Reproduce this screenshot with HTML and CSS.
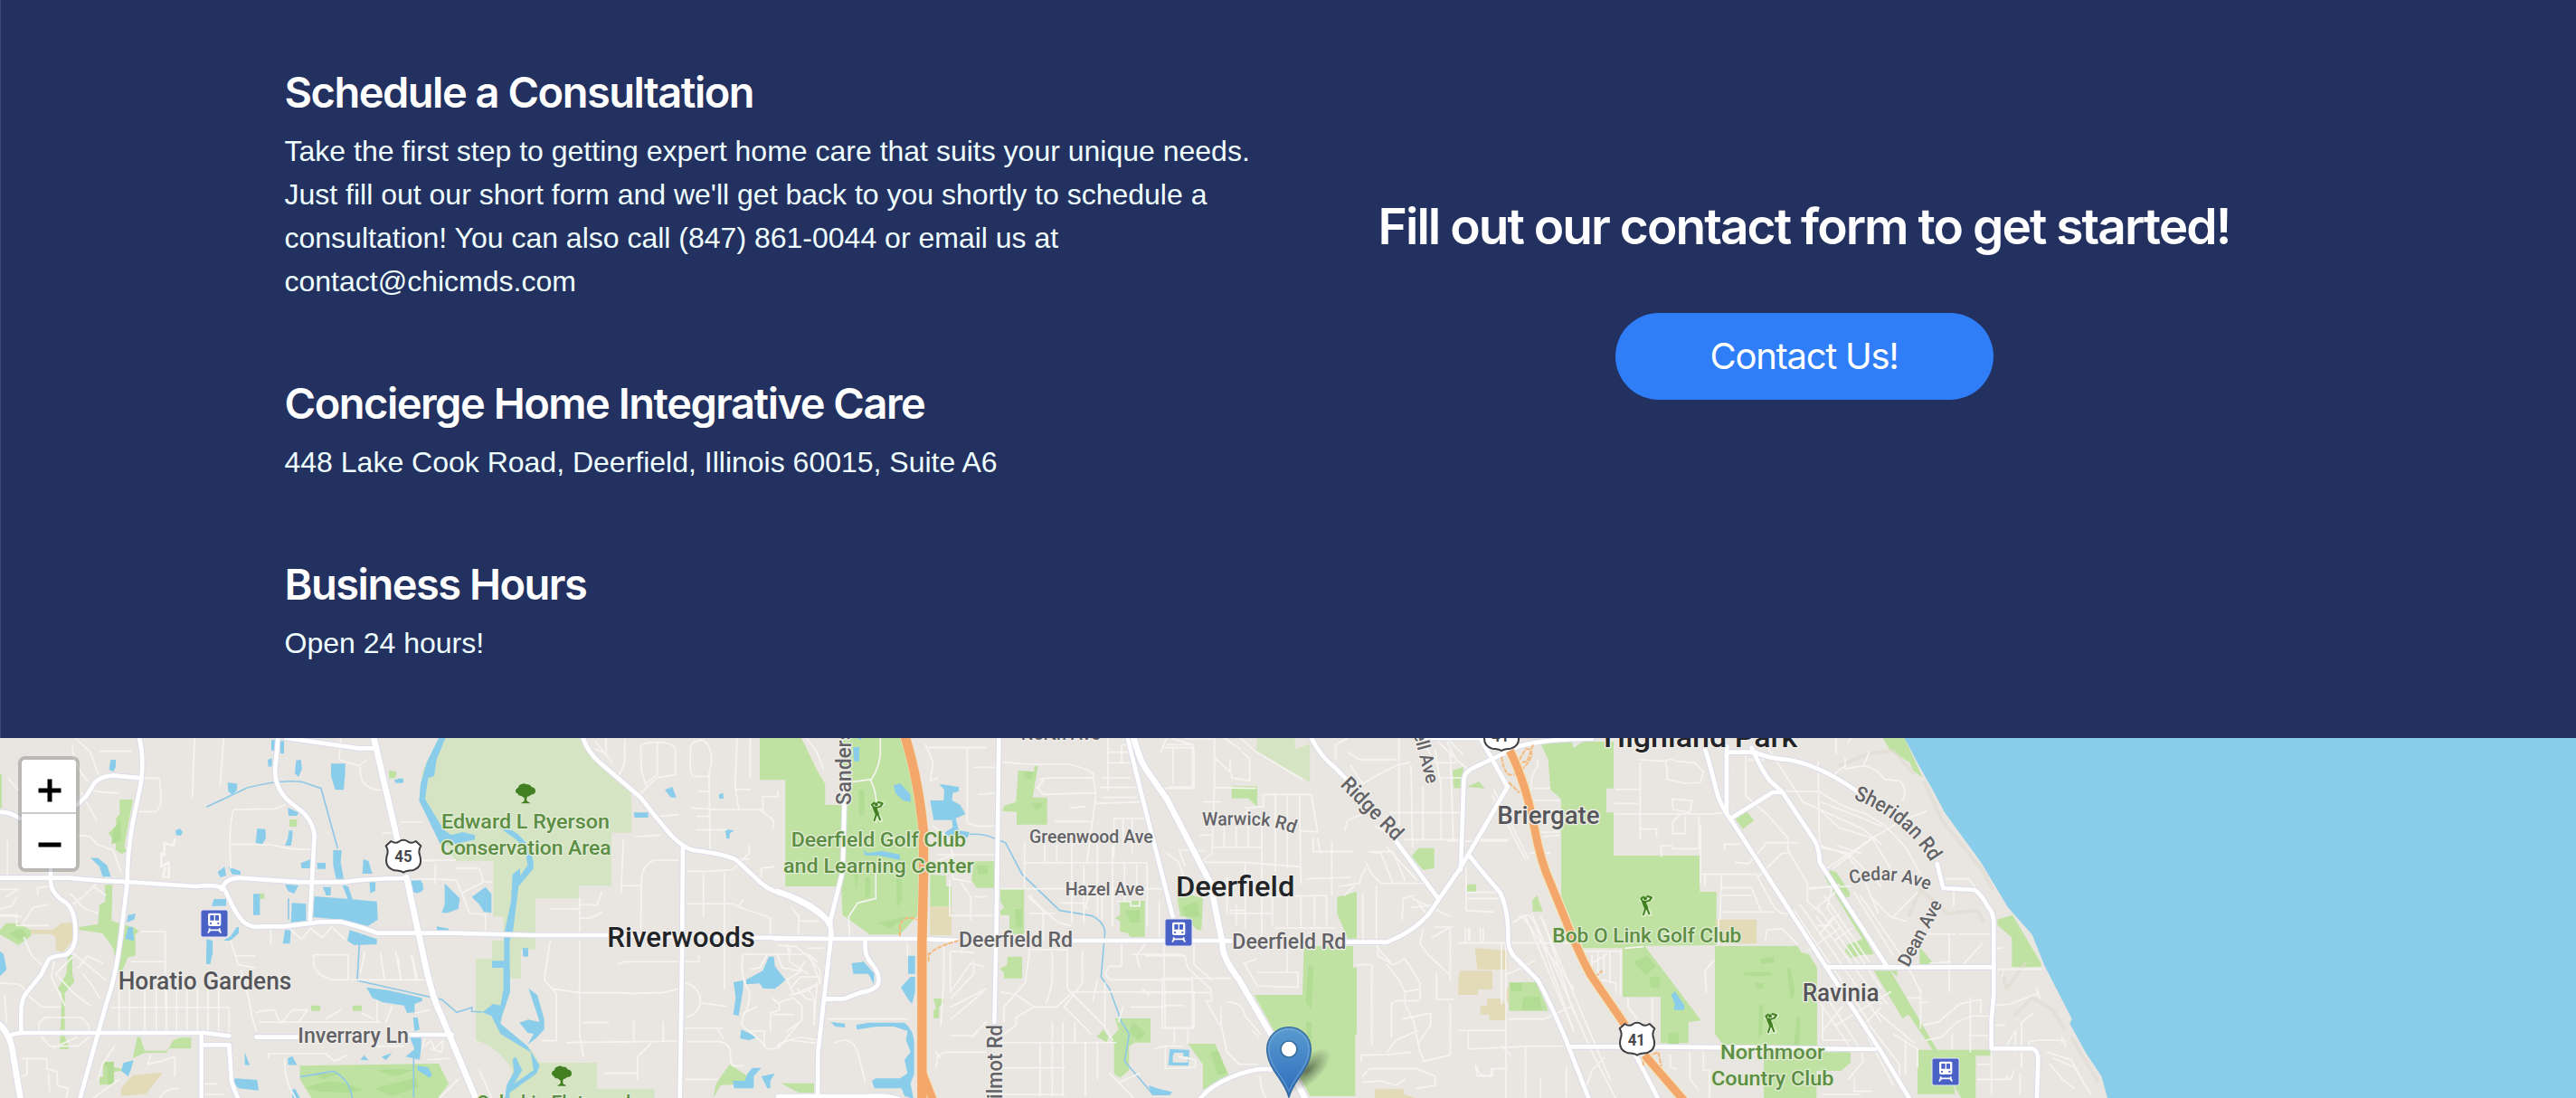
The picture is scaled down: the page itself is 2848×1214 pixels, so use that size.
FILE: index.html
```html
<!DOCTYPE html>
<html lang="en">
<head>
<meta charset="utf-8">
<title>Schedule a Consultation</title>
<link rel="stylesheet" href="styles.css">
</head>
<body>
<section class="contact">
  <div class="container">
    <div class="info">
      <div class="info-block">
        <h3>Schedule a Consultation</h3>
        <p>Take the first step to getting expert home care that suits your unique needs.<br>Just fill out our short form and we'll get back to you shortly to schedule a<br>consultation! You can also call (847) 861-0044 or email us at<br>contact@chicmds.com</p>
      </div>
      <div class="info-block">
        <h3>Concierge Home Integrative Care</h3>
        <p>448 Lake Cook Road, Deerfield, Illinois 60015, Suite A6</p>
      </div>
      <div class="info-block">
        <h3>Business Hours</h3>
        <p>Open 24 hours!</p>
      </div>
    </div>
    <div class="cta">
      <h2>Fill out our contact form to get started!</h2>
      <a class="btn">Contact Us!</a>
    </div>
  </div>
</section>
<section class="map">
<svg class="map-canvas" viewBox="0 18 8544 1194" preserveAspectRatio="none">
  <defs>
    <g id="train">
      <rect width="90" height="90" rx="7" fill="#4a62c6" stroke="#e6e6f4" stroke-width="3"/>
      <path fill="#fff" fill-rule="evenodd" d="M29 11h33q5 0 5 5v32q0 6-6 6H30q-6 0-6-6V16q0-5 5-5ZM31 18v17h13V18ZM48 18v17h12V18ZM30 42v5h6v-5ZM55 42v5h6v-5Z"/>
      <path fill="none" stroke="#fff" stroke-width="5" d="M29 61v12M62 61v12M26 67h39M30 66l-6 11M61 66l6 11"/>
    </g>
    <g id="tree">
      <path fill="#417f20" stroke="#e3ecd8" stroke-width="3" paint-order="stroke" d="M20 2q8-5 17 1q12-2 15 8q14 2 14 13q0 13-15 13q-4 6-12 6l-2 6v8q3 5 10 6v3H20v-3q7-1 9-6v-9l-10-7q-10 0-12-8q-8-1-7-10q1-8 9-9q1-10 11-12Z"/>
    </g>
    <g id="golfer">
      <path fill="none" stroke="#dff0cf" stroke-width="15" stroke-linecap="round" stroke-linejoin="round" d="M18 9v1M37 7L17 20L4 14M15 23l4 20l-7 20M20 42l11 19"/>
      <g fill="none" stroke="#417f20" stroke-linecap="round" stroke-linejoin="round"><path stroke-width="13" d="M12 22l7 18"/><path stroke-width="6" d="M8 20l-6-10L9 4M14 21L30 16L37 6L23 2M17 40l-7 23M21 40l8 20"/></g>
      <circle cx="16" cy="9" r="6" fill="#417f20"/>
    </g>
    <g id="shield">
      <path fill="#fff" stroke="#404044" stroke-width="6" stroke-linejoin="round" d="M18 4q14 10 27 1q6-5 14-5t14 5q13 9 27-1l17 16q-10 16-3 33q10 37-24 48q-22 1-31 7q-9-6-31-7Q-5 90 4 53q7-17-3-33Z"/>
    </g>
    <linearGradient id="pin" x1="0" y1="0" x2="0" y2="1"><stop offset="0" stop-color="#5a9bd0"/><stop offset="1" stop-color="#2e6bbb"/></linearGradient>
    <radialGradient id="shade"><stop offset="0" stop-color="#000" stop-opacity=".5"/><stop offset=".45" stop-color="#000" stop-opacity=".25"/><stop offset="1" stop-color="#000" stop-opacity="0"/></radialGradient>

    <g id="roads-main">
      <g>
        <path d="M0 482H230Q340 493 420 495L650 510Q740 500 750 530Q780 600 805 625T870 643H940L1065 628H1130Q1200 645 1250 665H1500L1760 672H2020L2750 684"/>
        <path d="M735 520Q745 485 790 482L1000 496H1140Q1200 485 1345 483"/>
        <path d="M1028 620L1043 340Q1035 280 980 245Q915 200 912 130L922 18M950 18L1190 52H1250"/>
        <path d="M0 264Q30 262 65 284M255 240L285 212L315 165Q335 145 375 142L468 151"/>
        <path d="M462 18L470 60Q475 130 466 175L440 300Q422 400 422 500L405 640Q388 800 355 890L262 1225"/>
        <path d="M168 455V500Q175 540 220 565Q248 590 250 650Q255 720 215 738Q170 740 160 755L135 805L90 860Q72 880 70 920V990"/>
        <path d="M35 1005Q55 995 80 996H680L760 1006M668 1000V1212M672 1036H760L768 1160L790 1215M995 1010H850M1360 1002H1500"/>
      </g>
      <g transform="translate(1320,0)">
        <path d="M614 18Q630 65 670 100L805 215Q850 275 895 328T980 390Q1100 405 1125 425L1205 500Q1235 525 1300 545Q1420 605 1430 640"/>
        <path d="M945 375L942 750L935 1215M1415 885H1440"/>
      </g>
      <g transform="translate(2580,0)">
        <path d="M223 150L215 460L175 620V690L133 1060L132 1215M0 525Q120 565 165 620Q185 660 175 690"/>
        <path d="M290 690Q285 740 310 765Q345 805 330 840Q310 858 275 862L220 883H160"/>
        <path d="M733 18L725 640L718 960M-10 684H460L605 690M975 690H1500M0 1206H300Q360 1202 400 1215"/>
        <path d="M1160 18L1210 220L1310 610"/>
      </g>
      <g transform="translate(3780,0)">
        <path d="M685 695H820Q910 660 960 600L1060 455Q1140 320 1220 180L1130 18M1065 455L1075 160Q1075 130 1110 115L1260 45Q1350 20 1500 20"/>
        <path d="M570 18Q600 80 650 118L700 170M850 360L990 550M290 692H315M1095 410Q1130 455 1195 530Q1225 590 1222 690Q1225 730 1250 750L1320 820Q1350 870 1410 1010L1490 1215"/>
        <path d="M435 1117Q380 1110 300 1145Q230 1175 200 1215M950 18H1130"/>
      </g>
      <g transform="translate(4800,0)">
        <path d="M855 55Q870 100 895 200Q905 240 945 295L1440 1060L1540 1225M927 45V265M930 65H1020Q1060 85 1130 90Q1230 105 1360 195M940 285L1080 198H1110"/>
        <path d="M1010 50Q1040 120 1070 160L1110 195L1220 360Q1235 390 1235 430L1460 778M1260 778H1810M405 1042H570M690 1042L1420 1050M620 1060L700 1215"/>
      </g>
      <g transform="translate(5880,0)">
        <path d="M545 435L565 516L670 522Q690 535 715 580Q735 600 733 650V870L725 950V1048H860Q882 1055 880 1090L876 1215"/>
      </g>
    </g>
    <g id="roads-trunk">
      <path d="M1240 18L1318 355M1348 480L1400 720Q1430 870 1460 930L1585 1230"/>
      <path d="M-5 965Q35 1000 42 1060L68 1215"/>
      <g transform="translate(3780,0)"><path d="M-20 18Q0 90 20 120L90 220L235 500Q250 580 275 700Q270 740 330 820L435 1000M510 1140L555 1225"/></g>
    </g>
    <path id="ridge" d="M4443 175L4630 365"/>
    <path id="sheridan" d="M6147 220Q6320 285 6410 440"/>
    <path id="warwick" d="M3988 308Q4160 305 4200 310Q4250 318 4300 338"/>
    <path id="cedar" d="M6138 503Q6270 468 6400 525"/>
  </defs>

  <rect y="18" width="8544" height="1194" fill="#e9e6e1"/>

  <!-- woodland -->
  <g fill="#d5e4c3">
    <path transform="translate(1320,0)" d="M135 18H614Q640 70 775 190V332H708V508H600V550H456V718H468L408 720V815H372L360 900L330 980L440 1050L470 1095H660V1182H850V1212H355L380 1120Q330 1040 258 1020V750H312V690H350V610H316V425H190L70 230L80 130Z"/>
    <path transform="translate(3780,0)" d="M390 18H515V55L565 38V165L385 60Z"/>
  </g>

  <!-- parks and golf courses -->
  <g fill="#bfe2a3">
    <path d="M0 138H6V250H0ZM397 222H441L412 375L418 395L402 402L383 388L385 372L360 333L385 310V285L397 270ZM347 505H373L370 625L440 645L462 657L448 670L450 740L425 745L405 790L390 790L375 715L340 665L262 655V645L325 635L330 570L350 560ZM0 655L20 632H60L103 655V675L62 705L0 670ZM225 738H240V800L247 825L215 865V1010L228 1040V1050H198L205 865L192 850L220 800ZM455 1010H465L480 1055H555L575 1020L600 1012H634V1048H555V1062H480L440 1080L445 1060ZM960 288H985V312H960ZM858 533H877V550L862 553ZM1290 125L1315 130L1312 150L1290 152ZM1032 905H1062V923H1032ZM1170 905H1200V923H1170ZM342 1092H378V1110L405 1115V1122L378 1125V1168H330V1142H342ZM995 1105L1440 1098H1455L1488 1165L1450 1215H1035L995 1150Z"/>
    <path transform="translate(2580,0)" d="M-60 18H78L130 125L157 170V240H205L215 18H405L450 150L480 300L465 605L405 670H305L215 605L210 510H25V157H-60ZM797 125L850 130V110H863L845 215H893V305H792V263L745 260L750 243L790 230ZM505 470L558 475V510H576V577H505ZM650 427H718V515H660L642 490ZM738 518H817V668H768V605H738V590L750 580L738 560ZM1135 558H1217V678H1170L1160 665L1135 660V625L1118 615L1135 605ZM762 743H810V815H750V795L735 783L760 770ZM516 882H550V897L535 910V947H516V922L525 915ZM1118 948H1236V1028H1185L1165 1040V1120L1135 1145L1115 1130V1035L1103 1015L1130 985ZM1080 985L1097 1010L1090 1028L1058 1008ZM-160 1100L-100 1140L-110 1165L-190 1170L-215 1212L-205 1165ZM10 1163H120V1195H70ZM1360 1032H1450L1495 1135L1410 1185V1100Z"/>
    <path transform="translate(3780,0)" d="M305 178H390V245L360 218H305ZM655 545L720 528V683H690L655 600ZM545 708H708V780H720V1000H715V1205H565L380 870H540ZM120 522L210 550L205 655H190L150 610H135ZM902 410L925 383H977V450L940 455ZM1038 125L1073 115L1070 185L1042 183ZM1085 180L1125 162L1145 185ZM1086 503H1116V528H1086ZM1303 555L1318 540L1337 593H1303ZM1225 828H1315L1353 915V923H1225Z"/>
    <path transform="translate(4800,0)" d="M310 35L413 32L420 50L450 30H552V185H528V265H552V408H838V528H893V705L655 707L842 955L800 960V1030H708V877H582V715H420L378 540V220L343 190L335 90ZM888 708H1162L1175 730L1200 735L1227 780V1060H1338V1095L1305 1122H1225V1215H1050V1035H915L888 1000ZM955 285L990 258L1018 292L980 320ZM1250 478L1270 457L1290 462L1335 530V545H1315L1415 735L1370 738L1340 748L1320 725L1325 705L1375 685L1380 690Z"/>
    <path transform="translate(5880,0)" d="M365 18H437L497 150L465 125L455 100L390 60ZM745 620L795 605L890 765V777H793V680L745 638ZM487 712L535 768H487ZM335 790H413V810L390 790L545 1052H722V1072H673V1212H625L600 1170L605 1199H480V1052H530L450 935L430 948Z"/>
  </g>
  <g fill="#b2dc94">
    <path d="M375 320l25-30v70l-30 10ZM30 665l40-15 20 20-25 20ZM343 1092h34v75h-20v-50ZM1010 1180q70-30 120-20l80 25-50 10-100-5ZM1250 1120q60-10 120 0l-60 20ZM1240 1180l140-35 10 30-90 30ZM1040 1130h90l-60 20Z"/>
    <path transform="translate(2580,0)" d="M268 190h18l2 80-18 8ZM290 480h15v60l-15 10ZM250 460h20l-10 60ZM392 440h18v120l-15 20ZM330 630l100-20-60 40ZM820 130h28l-8 25-25-5ZM840 235h40l-20 25ZM660 440h35v30h-30ZM785 585h25v60h-20ZM1180 960l40 40-25 20-30-30ZM1150 590h50v40h-30Z"/>
    <path transform="translate(3780,0)" d="M560 770l17 5-8 145-18-25ZM552 960h18v80l-15-20ZM140 580l50-20 10 50h-50ZM1230 830h38v28h-38ZM1275 875h50l10 45h-70ZM235 1060l25-5 30 75-30 5Z"/>
    <path transform="translate(4800,0)" d="M618 760l45-20 30 35-35 30ZM670 810h35v35h-30ZM735 995h33v37h-35ZM1040 750l45-7v20l-45 5ZM980 795h95v12h-85ZM1020 830h30v18h-25ZM1125 775l15 10 15 75-15 30ZM1035 900l12 5v90l-15 20ZM1160 940l12 5-5 110-18-15Z"/>
  </g>

  <!-- school grounds -->
  <g fill="#e3dab7">
    <path d="M100 653L175 655L205 632L240 630V690L210 728L185 722V680L170 668H103ZM440 1137L540 1127L485 1198L402 1206V1180Z"/>
    <path transform="translate(2580,0)" d="M505 577h71v95h-71Z"/>
    <path transform="translate(3780,0)" d="M1112 715L1220 722V785H1120ZM1062 790H1170V852H1122V870H1057V830ZM1152 882H1200L1218 912V953H1160V935H1130V907H1152ZM780 1183H877V1200L915 1212H780ZM1215 850l10-10v60l-12-10Z"/>
    <path transform="translate(4800,0)" d="M890 620H1026V700H893Z"/>
  </g>

  <!-- water -->
  <g fill="#8acdeb">
    <path d="M367 90H384V115L375 130L362 122ZM755 165L787 170L785 192L770 206L757 195ZM900 25H913V60H900ZM930 28H942V70H930ZM888 90L902 85V112L890 113ZM982 92L998 90L1002 120L990 148L978 135ZM1098 103H1145V130L1140 190H1112L1098 145ZM582 325L597 318L606 330L600 342L584 340ZM853 318L880 320L882 350L870 370L848 366ZM958 325H970V345L965 375L945 375L955 350ZM955 250L990 265L985 276H957ZM1308 155H1335V167H1312ZM300 415L325 416L355 440L368 478H340L330 445ZM1105 390H1133L1130 430L1140 485H1115L1105 440ZM998 433L1030 420L1035 450H1000ZM1052 432H1080V452H1052ZM1205 420L1222 425L1235 468H1202ZM722 462L745 445L750 475L730 480ZM758 445L798 460V472L770 470ZM945 503L990 507L975 535L955 525ZM1070 512H1097V540H1082ZM1135 505L1155 510L1170 555H1155ZM1225 490H1245V525L1228 533ZM1335 490L1395 487L1405 520L1385 533L1360 525ZM710 552H750V575H702ZM840 535H862V605H840ZM968 565L1015 568V625L965 630ZM1043 543L1160 552L1250 560L1253 620L1220 642L1130 620L1038 612ZM1160 655L1250 685V702L1175 705L1152 690ZM945 655H965L962 700H938ZM425 605L450 600L445 620L420 630ZM425 645H440L445 690L415 685ZM785 645H792V665L765 690H740L765 675ZM685 685L705 690L706 730L697 768H684ZM0 725L12 735L22 785L0 808ZM1215 845L1290 855L1400 880V890L1375 900V928L1350 930L1340 905L1270 895L1235 880ZM1370 945H1385L1392 985L1375 990ZM1360 1012H1397V1045L1392 1085L1345 1075L1375 1050ZM1195 1085L1208 1070L1222 1087ZM1265 1075L1300 1063L1280 1087ZM955 1080L970 1073L985 1103L955 1102ZM812 1060L828 1103L812 1102ZM780 1147L853 1152L858 1187L792 1180L772 1160ZM968 1183H980L995 1212H970ZM410 1095L443 1087L435 1115L425 1140L402 1122ZM1385 1105L1420 1110L1433 1135L1425 1145L1385 1120Z"/>
    <path transform="translate(1320,0)" d="M0 152H18V166H0ZM135 18H157L128 90L120 145L100 150L90 220L150 320L175 340L215 330L255 340V355L185 370H140L70 225L75 170L95 100ZM330 310L380 325Q450 370 450 450L400 510L380 670L370 690L372 860L345 940L340 965L430 1040L470 1105L460 1130L370 1195V1212H355L360 1170L385 1125L380 1085L390 1075L412 1120L385 1165L450 1120L440 1060L340 1000L310 940L280 928L315 900L340 905L350 850V780H312V757H352V670L375 560L380 470L405 450V475L430 440Q425 370 370 340ZM50 487L83 500L80 528L55 525ZM155 500L205 550L200 585L165 598H145L155 570ZM245 545L290 512L310 535V598L285 595L270 570ZM128 643L168 650V660H130ZM413 715H432V743H415ZM433 848L462 870L485 950V985L460 1012L430 1035L450 1000L430 995L403 962L432 952L470 960ZM885 190L910 180L923 215H905ZM1065 205L1078 200L1080 220L1065 218ZM782 265H830V282H785ZM1085 320L1115 325L1100 335V352H1090ZM1230 743H1247L1250 775L1285 820L1250 850L1210 848L1200 832L1155 835L1155 820L1210 790ZM1113 828L1145 822V850L1130 940L1112 935L1120 880ZM1138 985L1193 1010L1165 1020L1135 1015ZM1110 1155L1150 1155L1160 1130L1175 1112H1205L1180 1140V1180H1115ZM1205 1140L1250 1130L1235 1155V1180H1225Z"/>
    <path transform="translate(2580,0)" d="M250 48H270V95H252ZM262 18H277V25ZM384 175L405 168L440 205V230L415 225L390 200ZM535 170L565 175L600 180V195L580 200L578 225L605 240L622 270L590 285L600 325L635 330L630 348L555 343V330L580 315L578 290H517L505 225H550L552 190ZM282 385L295 400L345 392L405 405V422L335 408L290 408ZM432 740H455V800H432ZM440 810H455V860L445 900L430 882L408 845ZM245 765L285 760L320 800L318 835L300 800L250 800ZM0 798L25 820L0 842ZM175 960L222 965V978L190 975ZM260 970L300 962H420Q455 990 452 1040V1130L440 1165L450 1215L420 1205L410 1180H320L312 1155L325 1147H405L430 1130L420 1085L440 1060L425 1020L430 990L385 975H330L262 985ZM1300 1050L1365 1052L1362 1105L1295 1103ZM1230 1170L1265 1182L1308 1192L1300 1203H1240Z"/>
    <path transform="translate(4800,0)" d="M743 870L755 858L787 905L785 920H752L755 900Z"/>
    <path d="M6317 18H8544V1212H6990L6970 1140L6920 1065L6865 965L6872 950L6780 770L6740 670L6660 580L6570 430L6450 265L6405 180L6365 110Z"/>
  </g>
  <g class="creek">
    <path d="M685 247L820 183Q930 155 1000 163L1065 185L1120 385M957 550V620M1192 700L1185 822L1330 855L1440 880L1465 885L1515 928L1565 912V925L1600 927M1372 1080V1210M995 1142L1105 1123Q1160 1150 1168 1212"/>
    <path transform="translate(2580,0)" d="M635 337Q690 335 720 352L755 365L810 470L935 590L1040 607Q1080 625 1085 660L1072 810L1100 850L1140 960L1165 1000L1150 1090L1240 1195"/>
  </g>
  <path fill="#e9e6e1" d="M3895 1062h30v12h15v20h-50v-22Z"/>

  <!-- shoreline bluffs -->
  <g class="bluff">
    <path transform="translate(5880,0)" d="M500 160L560 290L690 450L730 520M220 110L320 70L400 60L470 140M450 610L490 520L580 600L680 590L700 630M760 790L775 850L840 760M800 940L860 880L930 920L970 990M990 1010L1080 1160"/>
  </g>

  <!-- local streets -->
  <g class="street">
    <path d="M250 18L300 65L325 135M330 62H435M470 151H528L533 190V235L520 262H460M645 18L638 215M742 18L730 175M30 155L60 190M240 40Q240 100 290 160M270 200L320 290M300 190Q340 200 395 200M1130 18L1125 90L1190 110L1215 92M1195 115Q1190 180 1250 190H1290M765 450L762 360Q765 280 775 255L910 253L945 240M765 370L900 372L960 385L1030 388M1330 297H1400M1270 333H1320M1380 425H1440"/>
    <path class="tight" d="M580 355L575 375L545 365V405L535 400V445L560 430V480H540L548 450"/>
    <path d="M25 360V470M260 340L300 345L320 370L375 390L400 460M0 520L60 520L20 545M125 540V515L160 510M0 585L40 575L55 545M0 605H55V635M75 635L110 580L160 570M55 640H160M0 610H70M80 680L105 740L150 780M240 570L275 545L320 500M235 535L275 580L325 600M310 510L350 540M240 730L350 820M240 745L185 800L250 870L300 905M180 760L170 810L215 905M260 780L290 740L340 765M275 800L300 830L330 880M0 830L65 835L85 855M15 870L22 960M90 870L140 910H200M130 990V960L150 945H270L295 970V1010L260 1040H165L130 1000"/>
    <path d="M470 660H548V910M435 760H550M395 830V990M430 840V990M370 912H700M480 850V990M518 850V990M552 850V990M586 850V990M620 850V990M655 850V990M690 850V990M725 850V990M700 912H760V990M765 690L790 770L845 780M785 740H845M800 790L825 880L835 940L850 990M898 650V700M1040 737H1155V820H1100Q1040 800 1040 760ZM1165 820H1440M1210 730L1195 800M1262 730L1275 820M1312 725L1330 820M1367 740L1385 820M850 930Q860 920 910 920L930 965L970 920H1020L990 960M860 960H1260M1080 950L1130 920M1200 930L1240 950M1250 890V960M1280 960L1300 910M960 650L1000 685L1030 650L1070 680L1100 645L1145 685"/>
    <path d="M75 1082H155V1115L190 1125V1170L225 1180L220 1212M90 1080V1135L70 1140M160 1130L165 1190M255 1010L180 1045M395 1150L310 1212M380 1040L340 1100L325 1150M500 1070L490 1100L535 1090L580 1075V1140M530 1212Q545 1180 590 1180M680 1165H720M680 1200H740M890 1080V1065H1080L1110 1090L1150 1070M945 1080Q940 1150 980 1212M1250 1040H1340"/>
    <g transform="translate(1320,0)">
      <path d="M690 18V70L655 55M655 30L710 98M752 25V100L730 148M805 50Q805 32 850 32Q920 30 920 60V140L860 150L800 205M860 35V140L820 170M805 50L808 130L825 180M970 50Q975 25 1010 25Q1040 40 1040 100L1030 145H980Q968 140 970 100ZM1032 148L1035 385M1125 18L1118 180L1130 250M1168 18V150M1118 188H1168M998 195H1030M975 250L1060 255H1200L1245 290V315M992 278H1035M990 322H1090M1260 195V212H1210V258M868 278L930 272M790 345L870 340M930 423H850Q808 440 808 490L805 650M748 355L740 530M748 508H805M963 460H1030L1110 455L1165 400V375M1013 465V610M1083 465V850M960 568H1110L1135 580L1235 615V680M1130 575L1145 555M1165 420H1110M1245 445L1205 450V480M1305 580L1330 610L1328 670M1330 625H1395"/>
      <path d="M5 423H190M-15 490L120 485L195 490L238 600L290 603V660M125 440L122 500M190 450H270L283 495M215 530L285 495H312M602 550V660L590 670M602 570L660 572L675 530M505 585H600M602 615H640L675 597M602 690V1000L615 1075M505 690L485 820L525 865V1022H480M510 850L600 862L740 863L780 865L880 862L930 850M730 768L750 760H998V740M615 962H698M782 955V1020M560 1028L830 1025L930 1023M880 960V1020M840 1030L795 1075V1150M685 1130H790M955 830Q1005 850 1003 890Q1000 930 958 945M1003 897L1090 908M955 980H1080M958 1025H1070Q1105 1035 1103 1070V1090L1110 1105H1145M955 1150H1060M1060 985L1080 1015M140 1210L200 1150M270 1120L310 1210"/>
      <path d="M1150 735H1360L1390 760M1360 715H1410M1145 735Q1130 800 1165 860Q1170 900 1145 940L1140 970L1200 1020L1220 1045Q1250 1060 1270 1030L1330 1010L1400 1020M1300 710V730M1225 735L1200 780L1170 785M1255 730L1275 780L1330 790L1350 760M1360 740L1400 790V830L1310 870M1300 850L1335 810H1390M1325 850L1350 880L1385 890M1390 830L1380 970M1240 880L1265 900V920L1235 930L1235 990M1265 895L1310 880L1340 905V955L1290 990M1240 935H1310M1145 930L1190 910M1215 990V1040M1165 990H1220M45 740L60 820M0 745L10 820M90 1040L110 1020L120 1050L150 1020L145 1060L110 1050M90 1010L80 1050M170 1080L100 1085M60 930L105 920"/>
    </g>
    <g transform="translate(2580,0)">
      <path d="M95 18L130 65L150 120M340 18V70Q335 120 310 155L250 163M305 155Q330 190 328 280M325 470V550L265 565L235 610L238 680M500 50H690M490 40L515 100L505 160L530 150M628 50V300L660 310H720M515 310L560 345L580 405M650 115H720M665 205L720 200M530 405H720M530 425L580 405V485L640 495M610 500L640 545V620M570 490V605M570 607H720M655 545H690M560 430V470M750 98L830 105H960Q1020 115 1045 135L1055 210L1025 430M870 155L900 150H1050M865 185L880 205L1050 200M860 185L880 160M880 160V150M970 250L1020 245M920 295H1040M1140 100V40H1160M1095 18V190M1100 65H1160M1100 100H1175M1075 150H1170M1070 182H1190M1080 215H1190M1055 235L1200 230M1115 285H1215M1115 290V410M1145 290V370M1175 285V400"/>
      <path d="M818 365V515M818 432H1225M740 518H1290M885 370V430M925 375V430M975 370V630M1015 440V630M1060 370V605M1110 380V640M1150 430V560M1190 440V510M1225 432V640M1040 515L1015 590M835 540L880 590V690M830 545L930 630L970 640M835 600L920 600M940 565H1010L1030 585M1075 540V620M1125 560H1170V575H1200V560M1265 560V680M1290 400L1330 430L1350 490"/>
      <path d="M575 725L650 730M572 730V860L640 765L680 775M550 710V830L540 970M610 720L650 700H700M575 880L650 800V760M575 910L690 850M575 950L680 860M575 1005H650L690 960M645 1010L660 990M525 1110L530 1070L560 1060H690M540 1080L525 1060M835 725L820 830L750 910V960M740 860L790 870L850 910H925L980 860H1375M830 720H960V850L1080 970L1110 1020M910 730V830L890 900M1010 725V830L950 910L1040 1000M1060 820L1045 890M1140 700V775H1100L1085 800L1100 820H1375M1085 830V970M1220 700L1190 740L1200 780M1280 700L1285 980H1375V810M1170 910H1290M1145 910L1130 960M1175 735H1340M1380 700V770L1440 820M850 910L790 945V970L750 1000M910 960V1020M945 960V1205M985 960V1030M870 1030V1205M910 1030V1205M740 1028H1120M740 1112H950M1020 1030V1205M1060 1030V1150M740 1200H950M1100 1130L1180 1212M1130 1160L1200 1130M1250 1050L1280 1040H1340M1315 980V1030M1360 980V1030M1285 1040V1115L1385 1110V1085L1330 1075"/>
      <path d="M0 705L60 710L110 750L140 830L90 860L40 870M30 700L40 760L100 800M50 860L30 820L80 790M100 850L120 880V970M0 1035L40 1020L130 1030M0 1050L80 950M190 1030Q240 1000 265 1060L290 1160M165 950H430M430 700V740"/>
      <path d="M1270 65L1290 18M1300 180H1375V40H1290M1310 55V170M1350 20H1440"/>
    </g>
    <g transform="translate(3780,0)">
      <path d="M80 50H180V185H80M175 40L110 20M248 18V180L240 400L210 425M250 85L305 135V150L365 160V85L340 65M300 90V130M335 18L380 60L540 155M250 182L385 185M210 230H270M280 18L335 55M365 250L345 275H220M350 250L410 245V205L570 205L590 330L530 325M405 300V430M450 200V460M490 205V450M530 210L535 500M280 290V380M320 290V380M360 290V380M215 430H350L530 445M200 340H240M240 380H400M130 390L215 392M130 390L150 440M575 350V395H705M637 365V540M555 485L700 480M350 430V650M405 440V690M290 480V600M320 570V640M300 590H345M300 600H440M400 545L620 540V640M440 545V640M490 545V640M535 545V640M580 545V640M450 648H650M600 400L590 350"/>
      <path d="M650 90V40L690 18M690 65L730 90H850M860 90V18M895 98L850 110L790 140L740 170L700 110M860 70V310M900 110L905 380M940 180V355M980 60L1000 180V355M1030 60L1040 350M1000 150H1075M830 265H1070M780 310L850 345M880 355H1060M740 270L690 290L680 325M940 30L980 100H1050M980 18L1040 80M1030 30L1070 70M750 450Q730 480 730 500L660 510M750 430L770 470L800 500H960M760 395L800 400L840 500M780 395H840L880 490M820 380L920 490M710 510L680 540M740 530V700M785 510V710L830 760M870 620L875 550L910 540M905 550L1030 610M900 580L990 570M950 600L920 560M1110 355H1220M1090 530H1180M1083 450V590L1175 595M1090 550H1190M1175 190L1290 420M1090 650V690M1130 650V700M970 680L1030 645V790L1030 820M980 645H1040M940 650L930 700L960 740L1025 800M1060 698H1440M1200 700V900M1215 700V1215"/>
      <path d="M20 740H150L160 780L235 850L240 890H220L265 970M75 815V980H180V860M80 815H300M0 862H235M80 905H145M10 850L30 870M345 765L390 750M350 770L390 840L525 845V795H390M490 710V790M290 895Q340 890 350 940L400 1000M270 910V970L290 1060L330 1100H390M375 990L395 1010M400 1140Q400 1180 420 1215M720 770H770V1035M790 710V740L840 770L880 750L930 830V885M820 770L860 820L880 860V900L910 960L930 1060L945 1090M835 1010V900L850 890H925M870 950L920 940L965 930V970L925 1030M880 860L930 850M820 1060L850 1020L920 990M735 1090V1070L820 1068L900 1060M940 1090L1030 1070V900M985 800V885H1040M1060 988H1210M1090 988V1050L1290 1040H1400M1280 1045V1215M740 1140L760 1115H920L980 1140V1170L920 1180M740 1160L800 1155L850 1170L880 1150M1115 1110L1120 1140H1165V1115H1200M1225 950H1340L1440 905M1220 800L1270 780L1310 755M1260 610L1290 605L1310 630L1440 990M1240 630L1270 610L1440 850M1340 625L1440 930"/>
    </g>
    <g transform="translate(4800,0)">
      <path d="M0 30L30 90L80 130M300 90V110L280 150V190M290 185H340M290 225H370M300 270V330H370M150 210L260 420M275 400H340M320 345L370 340M640 90L725 95M640 100V355M725 100Q730 80 760 95L820 100L850 130L840 165L790 168L730 155V130ZM640 188H560M555 235H630M745 220L812 225L805 265L750 255ZM555 270H880L920 265M640 320H695V345M770 275L748 295V335H790V280M710 410V375H745V385H835V280M840 310V500M845 470H1025L1085 580L1110 600H1160M910 475L905 620M910 515H1010L1040 590M915 540H1010M915 595H1085M855 475V510M1000 90H1050M990 70V210L1060 270L1130 350V390L1195 500V560L1240 600M920 390V370H970M955 430L1000 435L1060 365H1160M1030 480L1110 400H1130M1230 100L1235 380M1110 195H1235M1060 45L1180 230L1380 320L1440 370M1240 230L1440 310M1240 375L1340 410L1440 510M1280 450L1410 350M1200 515L1340 510M1235 380L1330 400"/>
      <path d="M60 650V695M75 650V690M120 650V695M260 610L420 990M280 600L480 1060L560 1215M310 610L540 1150M450 725H570M455 780L530 735M480 740V790M500 730V810M520 735V800M540 730V830M510 820L560 830V860M575 720V870M600 880V910L630 950M680 880V960M860 860L855 790L885 755M590 715L650 710M1055 690L1060 655L1110 650L1160 700M1150 590L1400 960M1170 570L1440 960M1225 610L1440 900M1260 580L1440 850M1225 580L1300 520M1250 650L1300 600M1285 690L1340 650M1200 720L1300 650M1245 910L1245 1020H1340M1240 900L1340 1050M1260 880L1370 1050M1380 970L1440 910M1370 1040L1380 1090L1330 1150M1245 1200H1370M1350 1150V1190H1410M900 620V700M740 1070V1110L760 1115M805 1060V1150L830 1180M850 1060V1120H870V1210M395 1110V1210M310 1150V1212M520 1080L480 1120L460 1180M210 1070L180 1040M95 1105L110 1135L150 1140V1115H200M0 360H200"/>
    </g>
    <g transform="translate(5880,0)">
      <path d="M210 18V70M260 18L250 30M200 140L240 110M240 120V85M320 65L300 110L240 120M300 110Q350 120 370 155L420 160Q450 190 430 225M155 195Q230 250 300 265L375 310L440 380L490 470M155 255L220 315L330 350L390 450M180 450L330 350L430 290L510 260M215 375L290 400M250 410L300 480L350 600M200 505L180 580M120 520L220 505M150 580L300 790M170 540L320 760M290 540L440 760L490 860M270 530L400 740M200 610L155 670M185 640H150M330 550L390 610L440 625M400 610L480 530M575 485H650L670 510M600 520V575M510 668H605M620 668H730M585 670V860M520 765L590 760M630 770L695 700M740 715H760M500 970L550 960L620 900L690 885V930M510 1020L560 1010L610 960L660 940H720M655 880V1060M595 1000V1050M650 1005H720M490 850V980M450 880H485M490 895H515M745 785H890M765 790L760 810M740 905L790 900L880 865L875 850M885 880L880 860M740 970H770M825 1110V960L865 930M770 1045L805 990V1060M850 1050V1025L880 1020H970V1040M960 1010V1030M930 1080L1000 1110L1055 1200M910 1060L990 1085L1035 1170M920 1100L960 1150L1000 1180M680 1100H725M725 1060V1200M680 1150H790L800 1120M770 1150L780 1140M820 1130V1200M320 970L420 1100V1180M300 980L400 1170M350 930L470 1030M400 1000L480 1050V1110M440 1020V1130M165 990L230 910M210 970L390 860M340 850L380 900"/>
    </g>
  </g>

  <use href="#roads-main" class="case"/>
  <use href="#roads-trunk" class="case wide"/>
  <use href="#roads-main" class="road"/>
  <use href="#roads-trunk" class="road wide"/>

  <!-- interchange ramps and expressways -->
  <g class="ramp">
    <path transform="translate(2580,0)" d="M405 675V640Q420 600 465 622M498 740Q520 710 600 690M500 760V730"/>
    <path transform="translate(4800,0)" d="M285 40L265 95L245 100M240 90L260 55Q280 50 280 70T250 120M180 80Q190 140 210 140T245 120M205 165L240 200M490 810L515 790M650 1105V1080L700 1060L710 1105H670"/>
  </g>
  <g class="express-case">
    <path transform="translate(2580,0)" d="M422 14Q465 150 483 330V480L478 700V1215M480 1130L515 1220"/>
    <path transform="translate(4800,0)" d="M208 60Q262 170 290 320Q310 430 345 505L400 640Q450 760 480 810L590 970M655 1070L785 1220"/>
  </g>
  <g class="express">
    <path class="broad" transform="translate(2580,0)" d="M422 14Q465 150 483 330V480L478 700V1215"/>
    <path transform="translate(2580,0)" d="M480 1130L515 1220"/>
    <path transform="translate(4800,0)" d="M208 60Q262 170 290 320Q310 430 345 505L400 640Q450 760 480 810L590 970M655 1070L785 1220"/>
  </g>

  <!-- points of interest -->
  <use href="#train" x="666" y="588"/>
  <use href="#train" x="3864" y="618"/>
  <use href="#train" x="6408" y="1080"/>
  <use href="#tree" x="1710" y="169"/>
  <use href="#tree" x="1830" y="1106"/>
  <use href="#golfer" x="2890" y="229"/>
  <use href="#golfer" x="5441" y="541"/>
  <use href="#golfer" x="5855" y="931"/>
  <use href="#shield" x="1279" y="356"/>
  <use href="#shield" x="5371" y="962"/>
  <use href="#shield" x="4921" y="-48"/>
  <g class="lbl route">
    <text x="1309" y="429" textLength="58" lengthAdjust="spacingAndGlyphs">45</text>
    <text x="5399" y="1039" textLength="58" lengthAdjust="spacingAndGlyphs">41</text>
    <text x="4947" y="31" textLength="58" lengthAdjust="spacingAndGlyphs">41</text>
  </g>

  <!-- labels -->
  <g class="lbl green">
    <text x="1464" y="318" textLength="558" lengthAdjust="spacingAndGlyphs">Edward L Ryerson</text>
    <text x="1461" y="405" textLength="566" lengthAdjust="spacingAndGlyphs">Conservation Area</text>
    <text x="1580" y="1252" textLength="545" lengthAdjust="spacingAndGlyphs">Cahokia Flatwoods</text>
    <text x="2624" y="378" textLength="580" lengthAdjust="spacingAndGlyphs">Deerfield Golf Club</text>
    <text x="2598" y="465" textLength="632" lengthAdjust="spacingAndGlyphs">and Learning Center</text>
    <text x="5149" y="695" textLength="627" lengthAdjust="spacingAndGlyphs">Bob O Link Golf Club</text>
    <text x="5706" y="1083" textLength="346" lengthAdjust="spacingAndGlyphs">Northmoor</text>
    <text x="5676" y="1170" textLength="406" lengthAdjust="spacingAndGlyphs">Country Club</text>
  </g>
  <g class="lbl town">
    <text x="2014" y="710" textLength="491" lengthAdjust="spacingAndGlyphs">Riverwoods</text>
    <text x="3900" y="543" textLength="394" lengthAdjust="spacingAndGlyphs">Deerfield</text>
    <text x="5319" y="47" textLength="643" lengthAdjust="spacingAndGlyphs">Highland Park</text>
  </g>
  <g class="lbl hamlet">
    <text x="392" y="853" textLength="575" lengthAdjust="spacingAndGlyphs">Horatio Gardens</text>
    <text x="4966" y="303" textLength="340" lengthAdjust="spacingAndGlyphs">Briergate</text>
    <text x="5978" y="892" textLength="255" lengthAdjust="spacingAndGlyphs">Ravinia</text>
  </g>
  <g class="lbl way">
    <text x="988" y="1030" textLength="368" lengthAdjust="spacingAndGlyphs">Inverrary Ln</text>
    <text x="3180" y="710" textLength="378" lengthAdjust="spacingAndGlyphs">Deerfield Rd</text>
    <text x="4087" y="717" textLength="378" lengthAdjust="spacingAndGlyphs">Deerfield Rd</text>
    <text transform="translate(2824,240) rotate(-90)" textLength="250" lengthAdjust="spacingAndGlyphs">Sanders</text>
    <text transform="translate(3324,1273) rotate(-90)" textLength="304" lengthAdjust="spacingAndGlyphs">Wilmot Rd</text>
    <text><textPath href="#ridge" textLength="262" lengthAdjust="spacingAndGlyphs">Ridge Rd</textPath></text>
    <text><textPath href="#sheridan" textLength="338" lengthAdjust="spacingAndGlyphs">Sheridan Rd</textPath></text>
  </g>
  <g class="lbl way small">
    <text x="3414" y="367" textLength="410" lengthAdjust="spacingAndGlyphs">Greenwood Ave</text>
    <text x="3533" y="540" textLength="262" lengthAdjust="spacingAndGlyphs">Hazel Ave</text>
    <text x="3386" y="25" textLength="264" lengthAdjust="spacingAndGlyphs">North Ave</text>
    <text><textPath href="#warwick" textLength="308" lengthAdjust="spacingAndGlyphs">Warwick Rd</textPath></text>
    <text><textPath href="#cedar" textLength="264" lengthAdjust="spacingAndGlyphs">Cedar Ave</textPath></text>
    <text transform="translate(6330,780) rotate(-62)" textLength="240" lengthAdjust="spacingAndGlyphs">Dean Ave</text>
    <text transform="translate(4670,-62) rotate(75)" textLength="242" lengthAdjust="spacingAndGlyphs">ndell Ave</text>
  </g>

  <!-- location marker -->
  <ellipse cx="4343" cy="1118" rx="100" ry="44" fill="url(#shade)" transform="rotate(-42 4343 1130)"/>
  <path d="M4275 1211C4260 1150 4202 1115 4202 1050A73 73 0 0 1 4348 1050C4348 1115 4290 1150 4275 1211Z" fill="url(#pin)" stroke="#35699c" stroke-width="4"/>
  <path d="M4275 1190C4260 1145 4209 1108 4209 1050A66 66 0 0 1 4341 1050C4341 1108 4290 1145 4275 1190Z" fill="none" stroke="#8bb9df" stroke-opacity=".45" stroke-width="4"/>
  <circle cx="4275" cy="1050" r="27" fill="#fff" stroke="#396f9f" stroke-width="5"/>
</svg>
<div class="zoom"><a class="zoom-btn"><svg viewBox="0 0 26 26"><path d="M0.5 13h25M13 0.5v25"/></svg></a><a class="zoom-btn"><svg viewBox="0 0 26 26"><path d="M0.5 13h25"/></svg></a></div>
</section>
</body>
</html>
```
FILE: styles.css
```css
* { box-sizing: border-box; }
body { margin: 0; width: 2848px; height: 1214px; overflow: hidden; }

.contact {
  height: 816px;
  background: #233160;
  border-left: 1px solid #3b4874;
  color: #fff;
}
.container { display: flex; width: 2280px; margin: 0 auto; }
.info { width: 1140px; padding: 73px 0 0 30px; }
.info-block { margin-bottom: 82px; }
h2, h3 { margin: 0; font-family: Inter, "Liberation Sans", sans-serif; font-weight: 600; white-space: nowrap; }
h3 { font-size: 47px; line-height: 57px; letter-spacing: -1.5px; margin-bottom: 13px; }
.info p {
  margin: 0;
  font: 32px/48px "Liberation Sans", Arial, sans-serif;
  color: #f0ffff;
  white-space: nowrap;
}
.cta {
  width: 1140px;
  padding-top: 217px;
  display: flex;
  flex-direction: column;
  align-items: center;
  gap: 62px;
}
h2 { font-size: 55px; line-height: 67px; letter-spacing: -1.95px; }
.btn {
  width: 418px;
  height: 96px;
  border-radius: 48px;
  background: #2f7df7;
  font: 400 40px/96px Inter, "Liberation Sans", sans-serif;
  letter-spacing: -1.3px;
  text-align: center;
}

.map { position: relative; height: 398px; background: #e9e6e1; }
.map-canvas { display: block; width: 2848px; height: 398px; }
.street { fill: none; stroke: #f6f4f1; stroke-width: 5; stroke-linecap: round; stroke-linejoin: round; }
.tight { stroke-width: 8; }
.creek { fill: none; stroke: #8fc8e6; stroke-width: 5; }
.bluff { fill: none; stroke: #e0dcd0; stroke-width: 12; stroke-linejoin: round; opacity: .6; }
.case, .road { fill: none; stroke-linejoin: round; stroke-linecap: round; }
.case { stroke: #dcdcea; stroke-width: 20; }
.case.wide { stroke-width: 26; }
.road { stroke: #fff; stroke-width: 14; }
.road.wide { stroke-width: 20; }
.ramp { fill: none; stroke: #f4b97e; stroke-width: 6; stroke-dasharray: 16 4; }
.express-case { fill: none; stroke: #f4e4bd; stroke-width: 34; }
.express { fill: none; stroke: #f3a76a; stroke-width: 26; }
.broad { stroke-width: 31; }

.lbl {
  font-family: Roboto, "Liberation Sans", sans-serif;
  paint-order: stroke;
  stroke: #f0eeea;
  stroke-width: 8;
  stroke-linejoin: round;
}
.green { font-size: 68px; font-weight: 500; fill: #5c8e43; stroke: #e2ecd5; }
.town { font-size: 93px; font-weight: 500; fill: #222428; }
.hamlet { font-size: 81px; font-weight: 500; fill: #56565a; }
.way { font-size: 70px; font-weight: 500; fill: #636367; }
.small { font-size: 62px; }
.route { font-size: 54px; font-weight: 700; fill: #47474b; stroke: none; }

.zoom {
  position: absolute;
  left: 20px;
  top: 20px;
  width: 68px;
  height: 128px;
  border: 4px solid rgba(0, 0, 0, .2);
  border-radius: 8px;
  background: #fff;
  background-clip: padding-box;
  display: flex;
  flex-direction: column;
}
.zoom-btn { height: 60px; padding-left: 2px; display: flex; align-items: center; justify-content: center; }
.zoom-btn:first-child { border-bottom: 2px solid #ccc; padding-top: 10px; }
.zoom-btn:last-child { padding-top: 8px; }
.zoom-btn svg { width: 26px; height: 26px; fill: none; stroke: #000; stroke-width: 5; }
```
